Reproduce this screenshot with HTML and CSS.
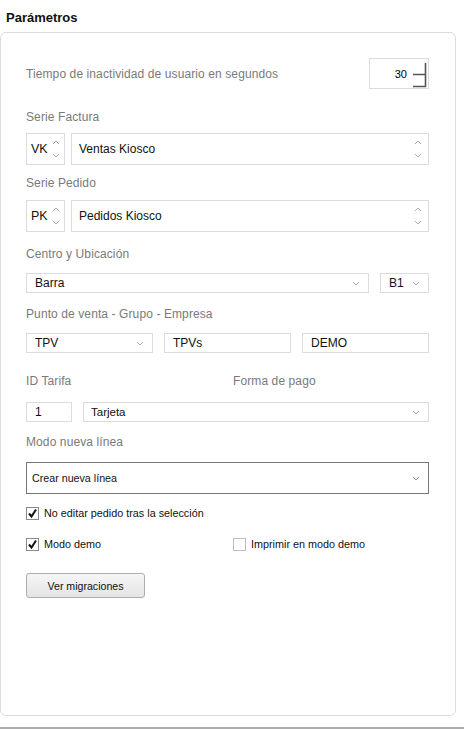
FILE: index.html
```html
<!DOCTYPE html>
<html lang="es">
<head>
  <meta charset="UTF-8" />
  <title>Parámetros</title>
  <link rel="stylesheet" href="styles.css">
</head>
<body>
  <h1 class="title">Parámetros</h1>

  <div class="panel">
    <!-- Tiempo de inactividad -->
    <div class="row-timeout">
      <span class="label">Tiempo de inactividad de usuario en segundos</span>
      <div class="spin-box">
        <span>30</span>
        <svg class="spin-glyph" width="14" height="26" viewBox="0 0 14 26">
          <path d="M0 11.5H13M12.5 0V24M0 23.5H13" stroke="#555" stroke-width="1.6" fill="none"/>
        </svg>
      </div>
    </div>

    <!-- Serie Factura -->
    <div class="label gap-20">Serie Factura</div>
    <div class="row gap-8">
      <div class="box tall code">VK <svg class="updown" width="8" height="20" viewBox="0 0 8 20"><path d="M1 5L4 2L7 5M1 15L4 18L7 15" stroke="#aaa" fill="none"/></svg></div>
      <div class="box tall grow">Ventas Kiosco <svg class="updown" width="8" height="20" viewBox="0 0 8 20"><path d="M1 5L4 2L7 5M1 15L4 18L7 15" stroke="#aaa" fill="none"/></svg></div>
    </div>

    <!-- Serie Pedido -->
    <div class="label gap-10">Serie Pedido</div>
    <div class="row gap-9">
      <div class="box tall code">PK <svg class="updown" width="8" height="20" viewBox="0 0 8 20"><path d="M1 5L4 2L7 5M1 15L4 18L7 15" stroke="#aaa" fill="none"/></svg></div>
      <div class="box tall grow">Pedidos Kiosco <svg class="updown" width="8" height="20" viewBox="0 0 8 20"><path d="M1 5L4 2L7 5M1 15L4 18L7 15" stroke="#aaa" fill="none"/></svg></div>
    </div>

    <!-- Centro y Ubicacion -->
    <div class="label gap-14">Centro y Ubicación</div>
    <div class="row gap-11 sp-11">
      <div class="box select grow">Barra <svg class="chev" width="8" height="5" viewBox="0 0 8 5"><path d="M1 1L4 4L7 1" stroke="#aaa" fill="none"/></svg></div>
      <div class="box select w-b1">B1 <svg class="chev" width="8" height="5" viewBox="0 0 8 5"><path d="M1 1L4 4L7 1" stroke="#aaa" fill="none"/></svg></div>
    </div>

    <!-- Punto de venta -->
    <div class="label gap-13">Punto de venta - Grupo - Empresa</div>
    <div class="row gap-11 sp-11">
      <div class="box select third">TPV <svg class="chev" width="8" height="5" viewBox="0 0 8 5"><path d="M1 1L4 4L7 1" stroke="#aaa" fill="none"/></svg></div>
      <div class="box select third">TPVs</div>
      <div class="box select third">DEMO</div>
    </div>

    <!-- Tarifa / Forma de pago -->
    <div class="row gap-20 labels-pair">
      <span class="label">ID Tarifa</span>
      <span class="label">Forma de pago</span>
    </div>
    <div class="row gap-13 sp-11">
      <div class="box select w-id">1</div>
      <div class="box select grow small-pad">Tarjeta <svg class="chev" width="8" height="5" viewBox="0 0 8 5"><path d="M1 1L4 4L7 1" stroke="#aaa" fill="none"/></svg></div>
    </div>

    <!-- Modo nueva linea -->
    <div class="label gap-12">Modo nueva línea</div>
    <div class="box big-select gap-12">Crear nueva línea <svg class="chev" width="8" height="5" viewBox="0 0 8 5"><path d="M1 1L4 4L7 1" stroke="#999" fill="none"/></svg></div>

    <!-- Checkboxes -->
    <label class="check gap-11"><span class="cb on"><svg width="11" height="11" viewBox="0 0 11 11"><path d="M2 5.5L4.5 8.5L9 1.5" stroke="#111" stroke-width="2" fill="none"/></svg></span>No editar pedido tras la selección</label>
    <div class="row gap-15 check-pair">
      <label class="check"><span class="cb on"><svg width="11" height="11" viewBox="0 0 11 11"><path d="M2 5.5L4.5 8.5L9 1.5" stroke="#111" stroke-width="2" fill="none"/></svg></span>Modo demo</label>
      <label class="check"><span class="cb"></span>Imprimir en modo demo</label>
    </div>

    <button class="btn gap-21">Ver migraciones</button>
  </div>

  <div class="bottom-line"></div>
</body>
</html>
```

FILE: styles.css
```css
body {
  margin: 0;
  background: #fff;
  font-family: "Liberation Sans", Arial, sans-serif;
  color: #000;
}

.title {
  margin: 0;
  height: 32px;
  padding-left: 6px;
  font-size: 13px;
  font-weight: bold;
  line-height: 35px;
  color: #111;
}

.panel {
  width: 403px;
  height: 657px;
  padding: 25px 26px 0 25px;
  border: 1px solid #dcdcdc;
  border-radius: 6px;
  display: flex;
  flex-direction: column;
}

.label {
  font-size: 12px;
  line-height: 16px;
  color: #7a7a7a;
  letter-spacing: 0.1px;
}

.row-timeout {
  display: flex;
  align-items: center;
  justify-content: space-between;
  height: 31px;
}

.spin-box {
  width: 57px;
  height: 29px;
  border: 1px solid #dcdcdc;
  display: flex;
  align-items: center;
  justify-content: flex-end;
  font-size: 11px;
  gap: 6px;
  padding-right: 1px;
}

.spin-glyph {
  margin-top: 4px;
}

.row {
  display: flex;
  gap: 6px;
}

.sp-11 {
  gap: 11px;
}

.box {
  box-sizing: border-box;
  border: 1px solid #dcdcdc;
  display: flex;
  align-items: center;
  justify-content: space-between;
  font-size: 12px;
  color: #111;
  background: #fff;
}

.tall {
  height: 32px;
  padding: 0 6px 0 7px;
  font-size: 12px;
}

.code {
  width: 39px;
  padding: 0 4px 0 4px;
  font-size: 12.5px;
}

.grow {
  flex: 1;
}

.select {
  height: 20px;
  padding: 0 8px 0 8px;
  font-size: 12px;
}

.small-pad {
  padding-left: 7px;
  font-size: 11.5px;
}

.w-b1 {
  width: 49px;
}

.third {
  flex: 1;
}

.w-id {
  width: 46px;
  padding-left: 8px;
  justify-content: flex-start;
}

.labels-pair .label:first-child {
  width: 201px;
}

.big-select {
  height: 32px;
  border-color: #767676;
  padding: 0 8px 0 5px;
  font-size: 10.7px;
}

.check {
  display: flex;
  align-items: center;
  gap: 5px;
  height: 16px;
  font-size: 10.8px;
  color: #111;
}

.check-pair .check:first-child {
  width: 201px;
}

.cb {
  box-sizing: border-box;
  width: 13px;
  height: 13px;
  border: 1px solid #bdbdbd;
  display: flex;
  align-items: center;
  justify-content: center;
}

.cb.on {
  border-color: #8a8a8a;
}

.btn {
  align-self: flex-start;
  width: 119px;
  height: 25px;
  border: 1px solid #adadad;
  border-radius: 3px;
  background: linear-gradient(#f6f6f6, #e4e4e4);
  font-family: inherit;
  font-size: 10.6px;
  color: #111;
}

.gap-8 { margin-top: 8px; }
.gap-9 { margin-top: 9px; }
.gap-10 { margin-top: 10px; }
.gap-11 { margin-top: 11px; }
.gap-12 { margin-top: 12px; }
.gap-13 { margin-top: 13px; }
.gap-14 { margin-top: 14px; }
.gap-15 { margin-top: 15px; }
.gap-20 { margin-top: 20px; }
.gap-21 { margin-top: 21px; }

.bottom-line {
  margin-top: 11px;
  height: 2px;
  background: #acacac;
}
```
